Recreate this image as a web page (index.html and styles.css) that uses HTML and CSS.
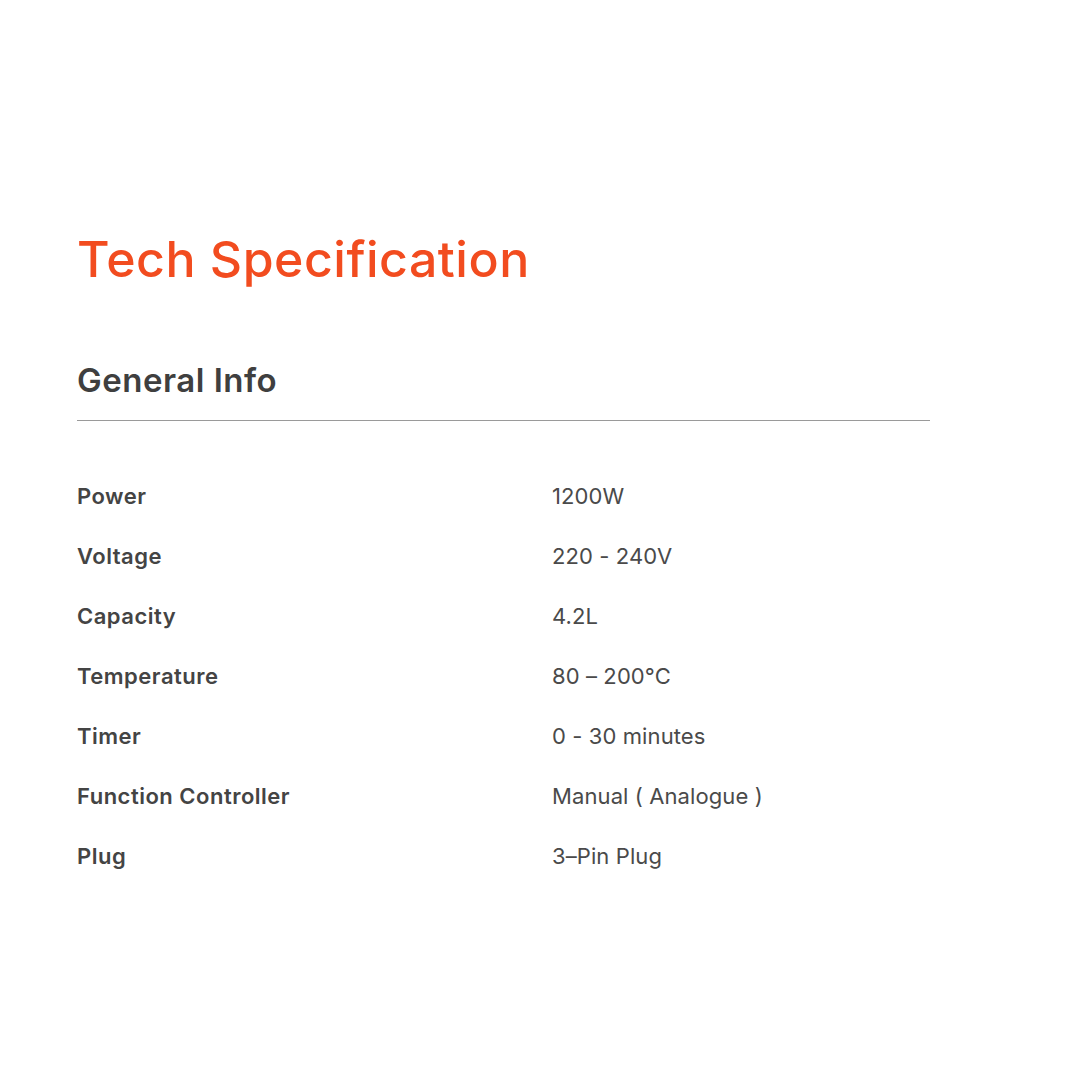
FILE: index.html
```html
<!DOCTYPE html>
<html lang="en">
<head>
<meta charset="utf-8">
<title>Tech Specification</title>
<link rel="stylesheet" href="styles.css">
</head>
<body>
<main class="page">
  <h1 class="title">Tech Specification</h1>
  <section class="group">
    <h2 class="group-title">General Info</h2>
    <dl class="specs">
      <div class="row"><dt>Power</dt><dd>1200W</dd></div>
      <div class="row"><dt>Voltage</dt><dd>220 - 240V</dd></div>
      <div class="row"><dt>Capacity</dt><dd>4.2L</dd></div>
      <div class="row"><dt>Temperature</dt><dd>80 – 200°C</dd></div>
      <div class="row"><dt>Timer</dt><dd>0 - 30 minutes</dd></div>
      <div class="row"><dt>Function Controller</dt><dd>Manual ( Analogue )</dd></div>
      <div class="row"><dt>Plug</dt><dd>3–Pin Plug</dd></div>
    </dl>
  </section>
</main>
</body>
</html>
```

FILE: styles.css
```css
* { box-sizing: border-box; }
html, body { margin: 0; padding: 0; background: #fff; }
body {
  font-family: Inter, "Noto Sans", sans-serif;
  width: 1080px;
  height: 1080px;
}
.page {
  padding: 226px 150px 0 77px;
}
.title {
  margin: 0;
  font-size: 50px;
  line-height: 66px;
  font-weight: 500;
  color: #f24c1f;
  letter-spacing: 0.5px;
}
.group { margin-top: 68px; }
.group-title {
  margin: 0;
  font-size: 33px;
  line-height: 40px;
  font-weight: 600;
  color: #3f3f3f;
  letter-spacing: 0.5px;
  padding-bottom: 20px;
  border-bottom: 1.5px solid #9a9a9a;
  width: 853px;
}
.specs { margin: 60px 0 0 0; }
.row {
  display: grid;
  grid-template-columns: 475px 1fr;
  height: 60px;
  align-items: start;
}
.row dt {
  font-size: 22px;
  line-height: 30px;
  font-weight: 600;
  color: #444;
  letter-spacing: 0.5px;
}
.row dd {
  margin: 0;
  font-size: 22px;
  line-height: 30px;
  font-weight: 400;
  color: #4a4a4a;
  letter-spacing: 0.1px;
}
```
